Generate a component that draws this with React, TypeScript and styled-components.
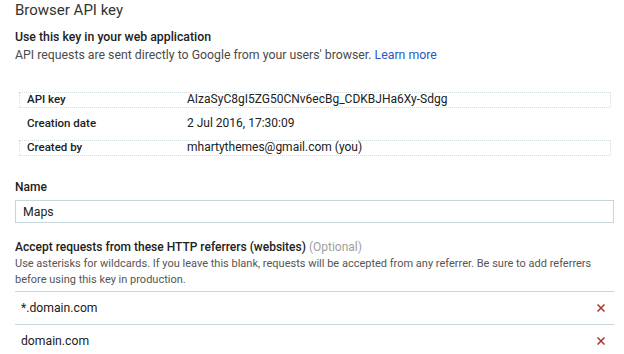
import React from "react";
import styled, { createGlobalStyle } from "styled-components";

const GlobalStyle = createGlobalStyle`
  body {
    margin: 0;
    background: #fff;
    font-family: Roboto, "Liberation Sans", Arial, sans-serif;
    color: #212121;
  }
`;

const Page = styled.div`
  padding: 0 10px 0 15px;
  display: flex;
  flex-direction: column;
`;

const Title = styled.h1`
  margin: 0;
  font-size: 15px;
  font-weight: 400;
  line-height: 20px;
  color: #333;
`;

const Heading = styled.h2`
  margin: 8px 0 0;
  font-size: 12.3px;
  font-weight: 500;
  line-height: 18px;
  color: #212121;
`;

const Sub = styled.p`
  margin: 0;
  font-size: 12.3px;
  line-height: 18px;
  color: #4a4a4a;
  a {
    color: #2a56c6;
    text-decoration: none;
  }
`;

const Table = styled.div`
  margin: 28px 3px 0 4px;
  display: flex;
  flex-direction: column;
  gap: 8px;
`;

const Row = styled.div<{ $dotted?: boolean }>`
  display: flex;
  align-items: flex-start;
  height: 14px;
  padding-left: 7px;
  border: 1px dotted ${(p) => (p.$dotted ? "#d3dcde" : "transparent")};
  line-height: 12px;
`;

const Label = styled.span`
  width: 160px;
  flex: none;
  font-size: 11.5px;
  font-weight: 500;
  color: #212121;
`;

const Value = styled.span`
  font-size: 12px;
  color: #212121;
`;

const FieldLabel = styled.label<{ $gap: number }>`
  display: block;
  margin-top: ${(p) => p.$gap}px;
  font-size: 12px;
  font-weight: 500;
  line-height: 16px;
  color: #212121;
`;

const Input = styled.div`
  margin-top: 5px;
  height: 21px;
  border: 1px solid #c4d7da;
  padding-left: 7px;
  display: flex;
  align-items: center;
  font-size: 12.3px;
  color: #212121;
`;

const Optional = styled.span`
  font-weight: 400;
  color: #9e9e9e;
`;

const Help = styled.p`
  margin: 1px 0 0;
  font-size: 11px;
  line-height: 16px;
  color: #555;
`;

const List = styled.ul`
  list-style: none;
  margin: 3px 0 0;
  padding: 0;
  border-top: 1px solid #c4d7da;
`;

const Item = styled.li`
  height: 32px;
  display: flex;
  align-items: center;
  justify-content: space-between;
  padding: 0 9px 0 6px;
  font-size: 12.2px;
  color: #212121;
  border-bottom: 1px solid #c4d7da;
`;

const Remove = styled.button`
  border: 0;
  background: none;
  padding: 0;
  width: 8px;
  height: 8px;
  display: flex;
  cursor: pointer;
`;

const Cross = () => (
  <svg width="8" height="8" viewBox="0 0 8 8">
    <path d="M0.5 0.5L7.5 7.5M7.5 0.5L0.5 7.5" stroke="#a8372c" strokeWidth="1.5" />
  </svg>
);

export default function App() {
  const referrers = ["*.domain.com", "domain.com"];
  return (
    <Page>
      <GlobalStyle />
      <Title>Browser API key</Title>
      <Heading>Use this key in your web application</Heading>
      <Sub>
        API requests are sent directly to Google from your users' browser.{" "}
        <a href="#">Learn more</a>
      </Sub>
      <Table>
        <Row $dotted>
          <Label>API key</Label>
          <Value>AIzaSyC8gI5ZG50CNv6ecBg_CDKBJHa6Xy-Sdgg</Value>
        </Row>
        <Row>
          <Label>Creation date</Label>
          <Value>2 Jul 2016, 17:30:09</Value>
        </Row>
        <Row $dotted>
          <Label>Created by</Label>
          <Value>mhartythemes@gmail.com (you)</Value>
        </Row>
      </Table>
      <FieldLabel $gap={23}>Name</FieldLabel>
      <Input>Maps</Input>
      <FieldLabel $gap={16}>
        Accept requests from these HTTP referrers (websites){" "}
        <Optional>(Optional)</Optional>
      </FieldLabel>
      <Help>
        Use asterisks for wildcards. If you leave this blank, requests will be
        accepted from any referrer. Be sure to add referrers before using this
        key in production.
      </Help>
      <List>
        {referrers.map((r) => (
          <Item key={r}>
            {r}
            <Remove aria-label="Remove">
              <Cross />
            </Remove>
          </Item>
        ))}
      </List>
    </Page>
  );
}
